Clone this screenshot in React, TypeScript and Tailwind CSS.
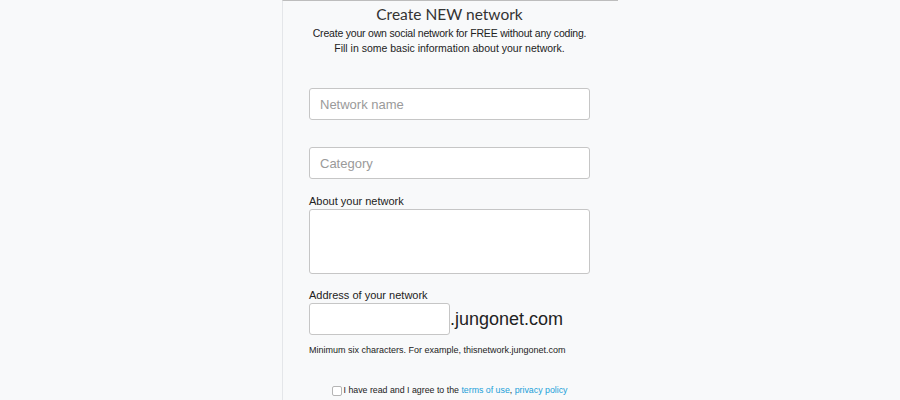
import React from "react";

export default function App() {
  const inputCls =
    "shrink-0 h-[32px] w-full bg-white border border-[#c6c6c6] rounded-[3px] px-[10px] text-[13px] placeholder:text-[#9a9a9a] outline-none";
  return (
    <div className="w-[900px] h-[400px] overflow-hidden bg-[#f8f9fa] flex justify-center" style={{ fontFamily: '"Liberation Sans", Arial, sans-serif' }}>
      <div className="w-[336px] h-full shrink-0 border-l border-l-[#e4e6e9] border-t border-t-[#bdbdbd] pl-[26px] pr-[28px] flex flex-col">
        <h1 className="shrink-0 text-center text-[15.5px] leading-[20px] mt-[3px] text-[#333]" style={{ fontFamily: 'Lato, "Open Sans", sans-serif' }}>
          Create NEW network
        </h1>
        <div className="shrink-0 text-center text-[10.5px] leading-[15px] text-[#222] mt-[2px] whitespace-nowrap">
          <div className="tracking-[-0.2px]">Create your own social network for FREE without any coding.</div>
          <div>Fill in some basic information about your network.</div>
        </div>
        <input className={`mt-[32px] ${inputCls}`} placeholder="Network name" />
        <input className={`mt-[27px] ${inputCls}`} placeholder="Category" />
        <label className="shrink-0 mt-[15px] text-[11px] leading-[14px] text-[#222]">About your network</label>
        <textarea className="shrink-0 mt-[1px] h-[65px] w-full bg-white border border-[#c6c6c6] rounded-[3px] resize-none outline-none" />
        <label className="shrink-0 mt-[14px] text-[11px] leading-[14px] text-[#222]">Address of your network</label>
        <div className="shrink-0 flex items-center mt-[1px]">
          <input className="h-[32px] w-[141px] bg-white border border-[#c6c6c6] rounded-[3px] outline-none" />
          <span className="text-[18px] text-[#222] leading-[20px]">.jungonet.com</span>
        </div>
        <p className="shrink-0 mt-[9px] text-[9px] leading-[12px] text-[#222] whitespace-nowrap">
          Minimum six characters. For example, thisnetwork.jungonet.com
        </p>
        <div className="shrink-0 mt-[28px] flex items-center justify-center text-[8.8px] text-[#222] whitespace-nowrap">
          <span className="w-[10px] h-[10px] border border-[#b5b5b5] rounded-[2px] bg-white mr-[2px]" />
          <span>
            I have read and I agree to the <span className="text-[#1a9fd9]">terms of use</span>,{" "}
            <span className="text-[#1a9fd9]">privacy policy</span>
          </span>
        </div>
      </div>
    </div>
  );
}
